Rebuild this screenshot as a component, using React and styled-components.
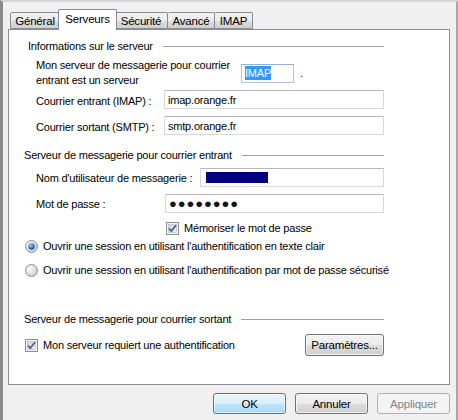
import React from 'react';
import styled, { createGlobalStyle } from 'styled-components';

const GlobalStyle = createGlobalStyle`
  body {
    margin: 0;
    background: #f0f0f0;
    font-family: "Liberation Sans", Arial, sans-serif;
    font-size: 11px;
    letter-spacing: -0.2px;
    color: #000;
  }
`;

const Window = styled.div`
  position: relative;
  width: 458px;
  height: 420px;
  box-sizing: border-box;
  background: #f0f0f0;
  border-top: 2px solid #d4d8d4;
  border-left: 3px solid #8a8a8a;
  border-right: 2px solid #a8a8a8;
  padding: 7px 0 0 5px;
  overflow: hidden;
`;

const TabBar = styled.div`
  display: flex;
  align-items: flex-end;
  height: 20px;
  padding-left: 2px;
  position: relative;
  z-index: 2;
`;

const Tab = styled.div`
  box-sizing: border-box;
  width: ${(p) => p.w}px;
  height: ${(p) => (p.active ? 21 : 17)}px;
  margin: ${(p) => (p.active ? '0 -2px -1px -2px' : '0')};
  border: 1px solid #898c95;
  border-bottom: ${(p) => (p.active ? 'none' : '1px solid #898c95')};
  border-left: ${(p) => (p.first || p.active ? '1px solid #898c95' : 'none')};
  border-radius: 2px 2px 0 0;
  background: ${(p) => (p.active ? '#fff' : 'linear-gradient(#f3f3f3, #ebebeb 50%, #dddddd 51%, #cfcfcf)')};
  z-index: ${(p) => (p.active ? 3 : 1)};
  display: flex;
  justify-content: center;
  padding-top: ${(p) => (p.active ? 3 : 2)}px;
  font-size: 11.5px;
`;

const Panel = styled.div`
  box-sizing: border-box;
  width: 442px;
  height: 356px;
  border: 1px solid #898c95;
  background: #fff;
  padding: 8px 65px 0 15px;
  display: flex;
  flex-direction: column;
`;

const SectionTitle = styled.div`
  display: flex;
  align-items: center;
  height: 16px;
  margin-top: ${(p) => p.mt || 0}px;
  padding-left: ${(p) => p.indent || 0}px;
  gap: 10px;
  white-space: nowrap;
  &::after {
    content: '';
    flex: 1;
    height: 1px;
    background: #a0a0a0;
    margin-top: 1px;
  }
`;

const Row = styled.div`
  display: flex;
  align-items: center;
  height: ${(p) => p.h || 19}px;
  margin-top: ${(p) => p.mt || 0}px;
  padding-left: ${(p) => (p.indent == null ? 12 : p.indent)}px;
`;

const Label = styled.div`
  width: ${(p) => p.w}px;
  flex-shrink: 0;
  line-height: 15px;
  padding-top: ${(p) => p.down || 0}px;
  white-space: nowrap;
`;

const TextBox = styled.div`
  box-sizing: border-box;
  flex: ${(p) => (p.w ? 'none' : '1')};
  width: ${(p) => (p.w ? `${p.w}px` : 'auto')};
  height: 19px;
  border: 1px solid ${(p) => (p.focus ? '#a9c6e4' : '#d5d9de')};
  border-top-color: ${(p) => (p.focus ? '#8eb2d8' : '#b5b9bf')};
  background: #fff;
  display: flex;
  align-items: center;
  padding-left: 3px;
  white-space: nowrap;
`;

const Selected = styled.span`
  background: #3399ff;
  color: #fff;
  padding: 1px 0;
`;

const Masked = styled.div`
  width: 62px;
  height: 11px;
  margin-left: 2px;
  background: #000080;
`;

const Dots = styled.span`
  font-size: 13px;
  letter-spacing: 0.9px;
  color: #111;
`;

const Option = styled.label`
  display: flex;
  align-items: center;
  gap: 5px;
  height: ${(p) => p.h || 14}px;
  margin-top: ${(p) => p.mt || 0}px;
  padding-left: ${(p) => p.indent || 0}px;
  white-space: nowrap;
  & > svg {
    flex-shrink: 0;
  }
`;

const Spacer = styled.div`
  flex: 1;
`;

const Footer = styled.div`
  display: flex;
  justify-content: flex-end;
  gap: 9px;
  width: 442px;
  margin-top: 8px;
`;

const Button = styled.button`
  box-sizing: border-box;
  width: ${(p) => p.w || 73}px;
  height: ${(p) => p.h || 21}px;
  font-family: inherit;
  font-size: 11.5px;
  letter-spacing: -0.2px;
  border-radius: 3px;
  padding: 0;
  border: 1px solid ${(p) => (p.primary ? '#3c7fb1' : p.disabled ? '#adb2b5' : '#707070')};
  color: ${(p) => (p.disabled ? '#838383' : '#000')};
  background: ${(p) =>
    p.primary
      ? 'linear-gradient(#eaf6fd, #d9f0fc 50%, #bee6fd 51%, #a7d9f5)'
      : p.disabled
      ? '#f4f4f4'
      : 'linear-gradient(#f2f2f2, #ebebeb 50%, #dddddd 51%, #cfcfcf)'};
  box-shadow: inset 0 0 0 1px ${(p) => (p.primary ? 'rgba(255,255,255,0.6)' : p.disabled ? 'transparent' : 'rgba(255,255,255,0.7)')};
`;

const CheckBox = () => (
  <svg width="13" height="13" viewBox="0 0 13 13">
    <defs>
      <linearGradient id="cbg" x1="0" y1="0" x2="1" y2="1">
        <stop offset="0" stopColor="#cbcfd5" />
        <stop offset="1" stopColor="#f6f6f6" />
      </linearGradient>
    </defs>
    <rect x="0.5" y="0.5" width="12" height="12" fill="#f4f4f4" stroke="#8e8f8f" />
    <rect x="2.5" y="2.5" width="8" height="8" fill="url(#cbg)" stroke="#b4b6b9" strokeWidth="0.6" />
    <path d="M3 6.5 L5.3 9 L10 3.2" fill="none" stroke="#4a5f97" strokeWidth="1.8" />
  </svg>
);

const Radio = ({ checked }) => (
  <svg width="13" height="13" viewBox="0 0 13 13">
    <defs>
      <radialGradient id="rbg" cx="0.35" cy="0.35" r="0.7">
        <stop offset="0" stopColor="#ffffff" />
        <stop offset="1" stopColor="#c6c9cc" />
      </radialGradient>
      <radialGradient id="rdot" cx="0.4" cy="0.35" r="0.7">
        <stop offset="0" stopColor="#9ad1f5" />
        <stop offset="0.6" stopColor="#2b7fcb" />
        <stop offset="1" stopColor="#0f3d85" />
      </radialGradient>
    </defs>
    <circle cx="6.5" cy="6.5" r="6" fill="url(#rbg)" stroke="#8e8f8f" />
    {checked && <circle cx="6.5" cy="6.5" r="3.2" fill="url(#rdot)" />}
  </svg>
);

const tabs = [
  { name: 'Général', w: 50 },
  { name: 'Serveurs', w: 59, active: true },
  { name: 'Sécurité', w: 53 },
  { name: 'Avancé', w: 47 },
  { name: 'IMAP', w: 38 },
];

const App = () => (
  <Window>
    <GlobalStyle />
    <TabBar>
      {tabs.map((t, i) => (
        <Tab key={t.name} w={t.w} active={t.active} first={i === 0}>
          {t.name}
        </Tab>
      ))}
    </TabBar>
    <Panel>
      <SectionTitle indent={4}>Informations sur le serveur</SectionTitle>
      <Row h={30} mt={4}>
        <Label w={205}>
          Mon serveur de messagerie pour courrier
          <br />
          entrant est un serveur
        </Label>
        <TextBox w={53} focus>
          <Selected>IMAP</Selected>
        </TextBox>
        <span style={{ marginLeft: 6 }}>.</span>
        <Spacer />
      </Row>
      <Row mt={2}>
        <Label w={128} down={3}>Courrier entrant (IMAP) :</Label>
        <TextBox>imap.orange.fr</TextBox>
      </Row>
      <Row mt={7}>
        <Label w={128} down={3}>Courrier sortant (SMTP) :</Label>
        <TextBox>smtp.orange.fr</TextBox>
      </Row>
      <SectionTitle mt={12}>Serveur de messagerie pour courrier entrant</SectionTitle>
      <Row mt={5}>
        <Label w={164} down={2}>Nom d'utilisateur de messagerie :</Label>
        <TextBox>
          <Masked />
        </TextBox>
      </Row>
      <Row mt={7}>
        <Label w={129} down={2}>Mot de passe :</Label>
        <TextBox>
          <Dots>●●●●●●●●</Dots>
        </TextBox>
      </Row>
      <Option mt={8} indent={142}>
        <CheckBox />
        Mémoriser le mot de passe
      </Option>
      <Option mt={4} indent={1}>
        <Radio checked />
        Ouvrir une session en utilisant l'authentification en texte clair
      </Option>
      <Option mt={10} indent={1}>
        <Radio />
        Ouvrir une session en utilisant l'authentification par mot de passe sécurisé
      </Option>
      <SectionTitle mt={34}>Serveur de messagerie pour courrier sortant</SectionTitle>
      <Row h={22} mt={7} indent={1}>
        <Option>
          <CheckBox />
          Mon serveur requiert une authentification
        </Option>
        <Spacer />
        <Button w={79} h={22}>Paramètres...</Button>
      </Row>
    </Panel>
    <Footer>
      <Button primary>OK</Button>
      <Button>Annuler</Button>
      <Button disabled>Appliquer</Button>
    </Footer>
  </Window>
);

export default App;
